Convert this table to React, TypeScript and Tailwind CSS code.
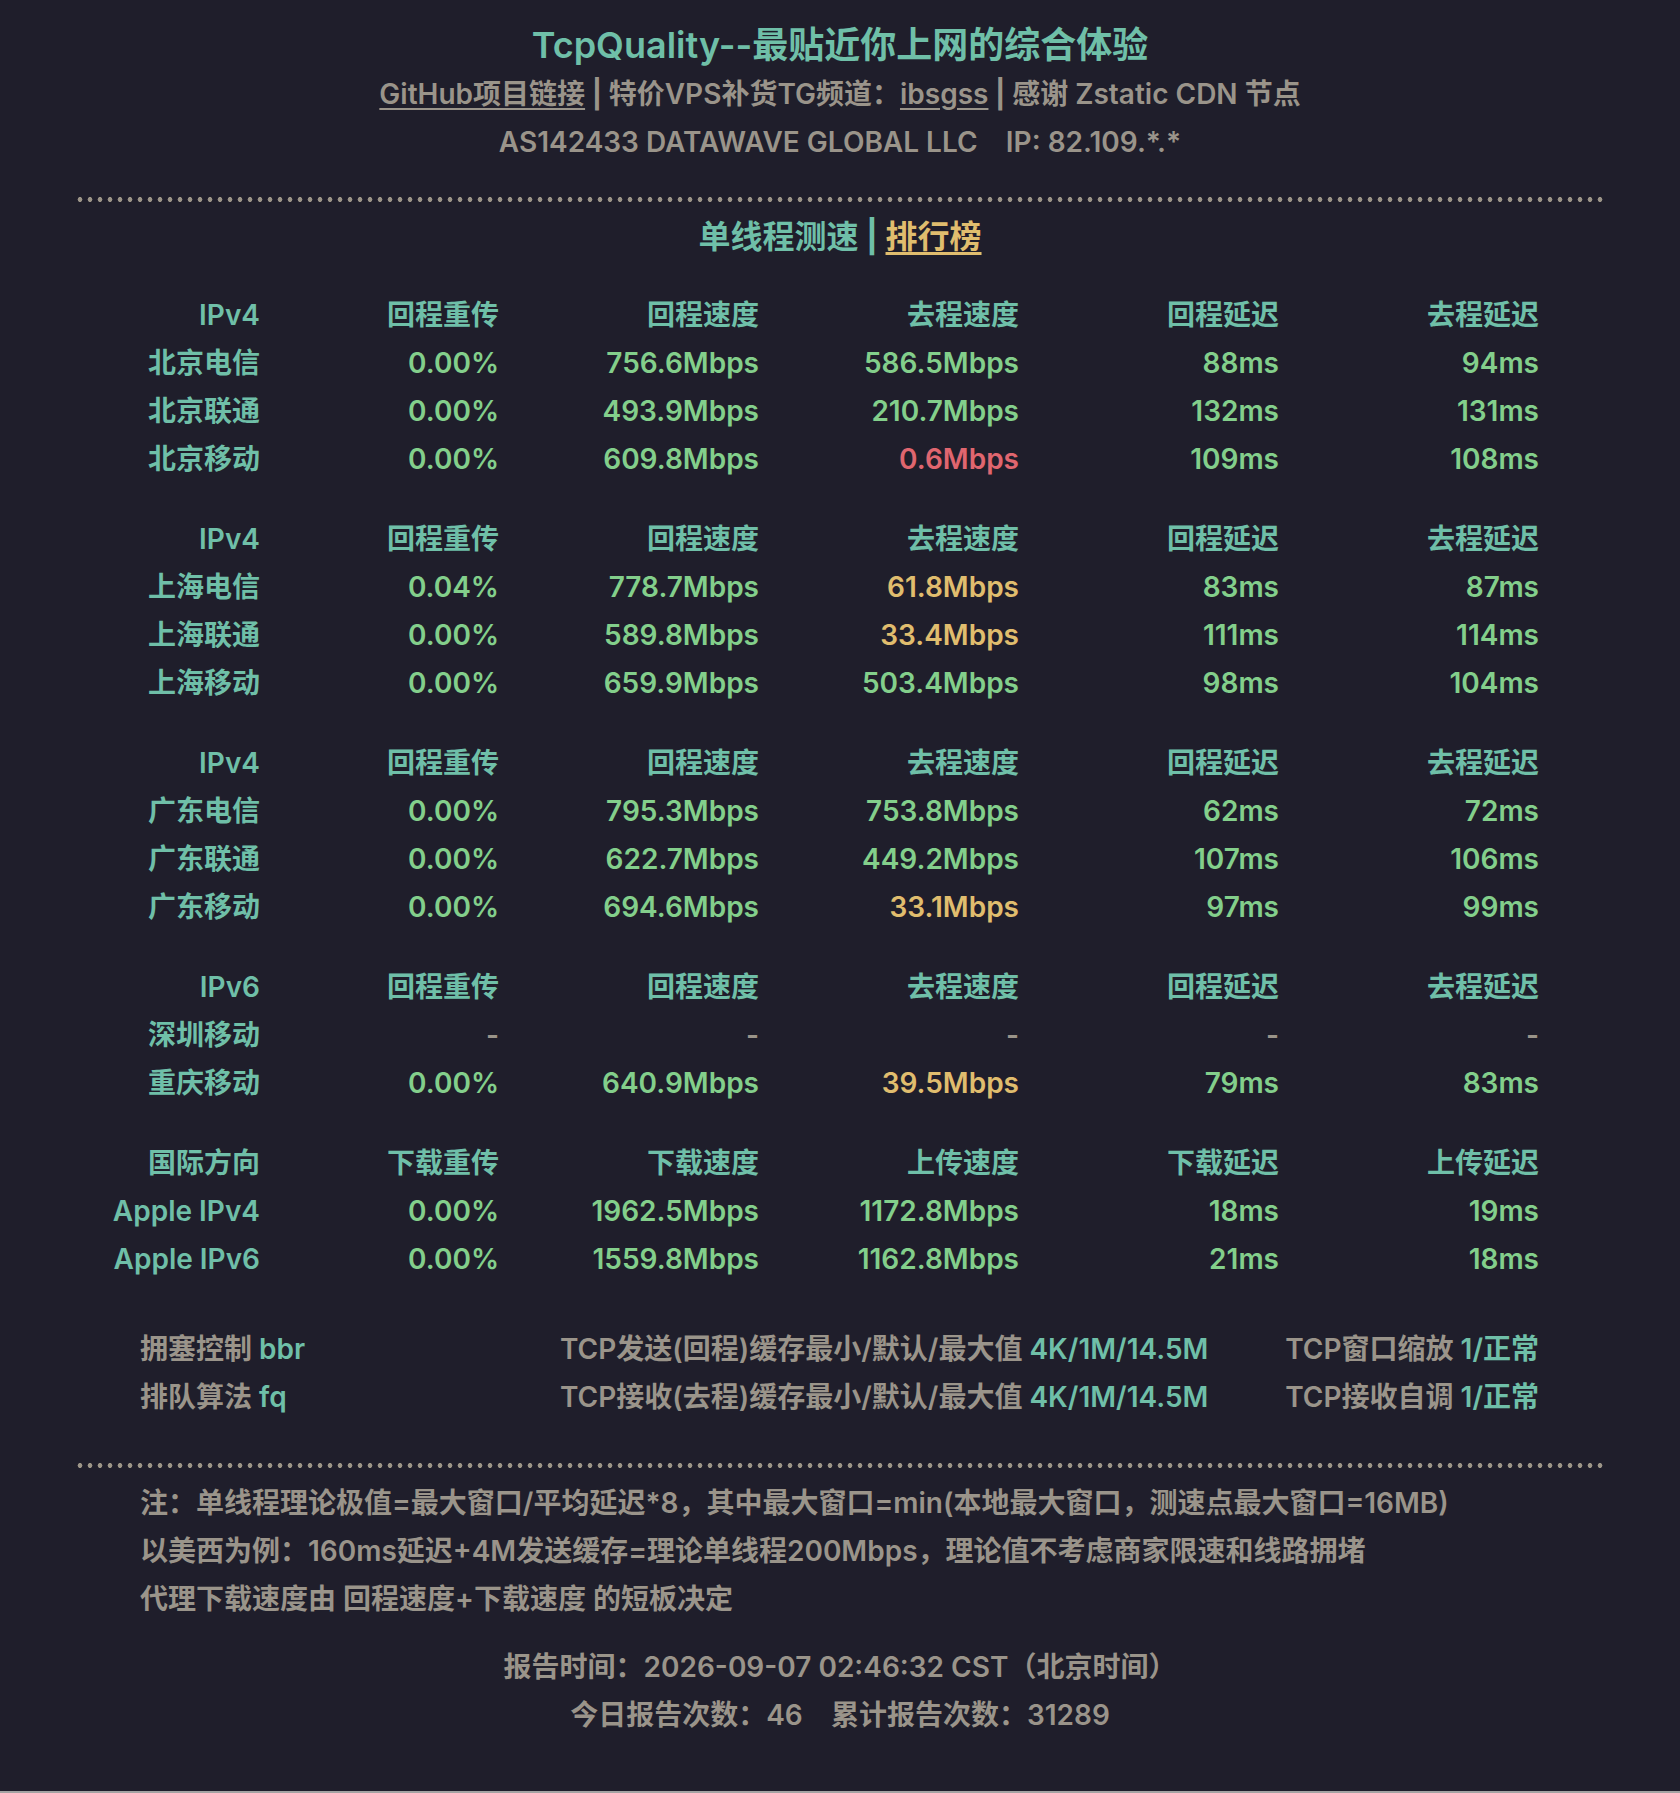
import React from "react";

type Tone = "ok" | "warn" | "bad" | "none";

type Row = { name: string; cells: [string, Tone][] };
type Group = { head: string[]; rows: Row[] };

const toneClass: Record<Tone, string> = {
  ok: "text-[#83cf8b]",
  warn: "text-[#e0bd6e]",
  bad: "text-[#e0666f]",
  none: "text-[#9a948a]",
};

const ipHead = ["回程重传", "回程速度", "去程速度", "回程延迟", "去程延迟"];

const groups: Group[] = [
  {
    head: ["IPv4", ...ipHead],
    rows: [
      { name: "北京电信", cells: [["0.00%", "ok"], ["756.6Mbps", "ok"], ["586.5Mbps", "ok"], ["88ms", "ok"], ["94ms", "ok"]] },
      { name: "北京联通", cells: [["0.00%", "ok"], ["493.9Mbps", "ok"], ["210.7Mbps", "ok"], ["132ms", "ok"], ["131ms", "ok"]] },
      { name: "北京移动", cells: [["0.00%", "ok"], ["609.8Mbps", "ok"], ["0.6Mbps", "bad"], ["109ms", "ok"], ["108ms", "ok"]] },
    ],
  },
  {
    head: ["IPv4", ...ipHead],
    rows: [
      { name: "上海电信", cells: [["0.04%", "ok"], ["778.7Mbps", "ok"], ["61.8Mbps", "warn"], ["83ms", "ok"], ["87ms", "ok"]] },
      { name: "上海联通", cells: [["0.00%", "ok"], ["589.8Mbps", "ok"], ["33.4Mbps", "warn"], ["111ms", "ok"], ["114ms", "ok"]] },
      { name: "上海移动", cells: [["0.00%", "ok"], ["659.9Mbps", "ok"], ["503.4Mbps", "ok"], ["98ms", "ok"], ["104ms", "ok"]] },
    ],
  },
  {
    head: ["IPv4", ...ipHead],
    rows: [
      { name: "广东电信", cells: [["0.00%", "ok"], ["795.3Mbps", "ok"], ["753.8Mbps", "ok"], ["62ms", "ok"], ["72ms", "ok"]] },
      { name: "广东联通", cells: [["0.00%", "ok"], ["622.7Mbps", "ok"], ["449.2Mbps", "ok"], ["107ms", "ok"], ["106ms", "ok"]] },
      { name: "广东移动", cells: [["0.00%", "ok"], ["694.6Mbps", "ok"], ["33.1Mbps", "warn"], ["97ms", "ok"], ["99ms", "ok"]] },
    ],
  },
  {
    head: ["IPv6", ...ipHead],
    rows: [
      { name: "深圳移动", cells: [["-", "none"], ["-", "none"], ["-", "none"], ["-", "none"], ["-", "none"]] },
      { name: "重庆移动", cells: [["0.00%", "ok"], ["640.9Mbps", "ok"], ["39.5Mbps", "warn"], ["79ms", "ok"], ["83ms", "ok"]] },
    ],
  },
  {
    head: ["国际方向", "下载重传", "下载速度", "上传速度", "下载延迟", "上传延迟"],
    rows: [
      { name: "Apple IPv4", cells: [["0.00%", "ok"], ["1962.5Mbps", "ok"], ["1172.8Mbps", "ok"], ["18ms", "ok"], ["19ms", "ok"]] },
      { name: "Apple IPv6", cells: [["0.00%", "ok"], ["1559.8Mbps", "ok"], ["1162.8Mbps", "ok"], ["21ms", "ok"], ["18ms", "ok"]] },
    ],
  },
];

function Dots() {
  return (
    <div className="h-[5px] w-full bg-[radial-gradient(circle,#9c9588_2.1px,transparent_2.7px)] bg-[length:10px_5px]" />
  );
}

function ResultGroup({ group }: { group: Group }) {
  return (
    <div className="grid grid-cols-[185px_239px_260px_260px_260px_260px] text-right leading-[48px]">
      {group.head.map((h, i) => (
        <div key={i} className="text-[#6fbfa8]">
          {h}
        </div>
      ))}
      {group.rows.map((r) => (
        <React.Fragment key={r.name}>
          <div className="text-[#6fbfa8]">{r.name}</div>
          {r.cells.map(([v, tone], i) => (
            <div key={i} className={toneClass[tone]}>
              {v}
            </div>
          ))}
        </React.Fragment>
      ))}
    </div>
  );
}

export default function App() {
  return (
    <div className="min-h-[1793px] border-b-2 border-[#a3a3a3] bg-[#1f1e2b] font-['Inter','Noto_Sans_CJK_SC',sans-serif] text-[28px] font-semibold text-[#9a948a]">
      <div className="mx-auto w-[1530px] pb-[49px]">
        <header className="pt-[20px] text-center">
          <h1 className="text-[36px] leading-[50px] font-semibold text-[#6fbfa8]">
            TcpQuality--最贴近你上网的综合体验
          </h1>
          <p className="leading-[48px] whitespace-pre">
            <span className="underline underline-offset-4">GitHub项目链接</span>
            <span className="font-bold"> | </span>
            特价VPS补货TG频道：
            <span className="underline underline-offset-4">ibsgss</span>
            <span className="font-bold"> | </span>
            感谢 Zstatic CDN 节点
          </p>
          <p className="leading-[48px] whitespace-pre">
            AS142433 DATAWAVE GLOBAL LLC    IP: 82.109.*.*
          </p>
        </header>

        <div className="mt-[31px]">
          <Dots />
        </div>

        <div className="mt-[11px] text-center text-[32px] leading-[48px] whitespace-pre text-[#6fbfa8]">
          单线程测速<span className="font-bold"> | </span>
          <span className="text-[#e0bd6e] underline underline-offset-4">排行榜</span>
        </div>

        <div className="mt-[30px] flex flex-col gap-[32px]">
          {groups.map((g, i) => (
            <ResultGroup key={i} group={g} />
          ))}
        </div>

        <div className="mt-[42px] grid grid-cols-[420px_1fr_auto] pl-[65px] pr-[66px] leading-[48px]">
          <div>
            拥塞控制 <span className="text-[#6fbfa8]">bbr</span>
          </div>
          <div>
            TCP发送(回程)缓存最小/默认/最大值 <span className="text-[#6fbfa8]">4K/1M/14.5M</span>
          </div>
          <div className="text-right">
            TCP窗口缩放 <span className="text-[#6fbfa8]">1/正常</span>
          </div>
          <div>
            排队算法 <span className="text-[#6fbfa8]">fq</span>
          </div>
          <div>
            TCP接收(去程)缓存最小/默认/最大值 <span className="text-[#6fbfa8]">4K/1M/14.5M</span>
          </div>
          <div className="text-right">
            TCP接收自调 <span className="text-[#6fbfa8]">1/正常</span>
          </div>
        </div>

        <div className="mt-[42px]">
          <Dots />
        </div>

        <div className="mt-[11px] pl-[65px] leading-[48px]">
          <p>注：单线程理论极值=最大窗口/平均延迟*8，其中最大窗口=min(本地最大窗口，测速点最大窗口=16MB)</p>
          <p>以美西为例：160ms延迟+4M发送缓存=理论单线程200Mbps，理论值不考虑商家限速和线路拥堵</p>
          <p>代理下载速度由 回程速度+下载速度 的短板决定</p>
        </div>

        <div className="mt-[20px] text-center leading-[48px] whitespace-pre">
          <p>报告时间：2026-09-07 02:46:32 CST（北京时间）</p>
          <p>今日报告次数：46    累计报告次数：31289</p>
        </div>
      </div>
    </div>
  );
}
